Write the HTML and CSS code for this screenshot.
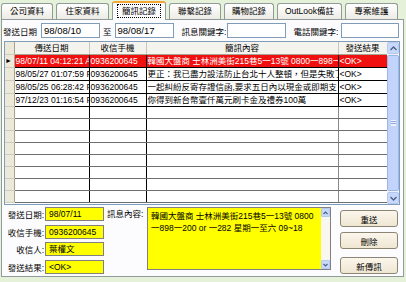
FILE: index.html
```html
<!DOCTYPE html>
<html lang="zh-Hant">
<head>
    <meta charset="UTF-8">
    <title>簡訊記錄</title>
    <link rel="stylesheet" href="styles.css">
</head>
<body>
    <div class="window">
        <div class="tabs">
            <div class="tab t1">公司資料</div>
            <div class="tab t2">住家資料</div>
            <div class="tab t3 active"><span class="focus">簡訊記錄</span></div>
            <div class="tab t4">聯繫記錄</div>
            <div class="tab t5">購物記錄</div>
            <div class="tab t6">OutLook備註</div>
            <div class="tab t7">專案維護</div>
        </div>
        <div class="panel">
            <div class="search">
                <span class="lbl first">發送日期</span>
                <span class="box">98/08/10</span>
                <span class="lbl to">至</span>
                <span class="box">98/08/17</span>
                <span class="lbl kw1">訊息關鍵字:</span>
                <span class="box"></span>
                <span class="lbl kw2">電話關鍵字:</span>
                <span class="box last"></span>
            </div>
            <div class="grid">
                <div class="grid-body">
                    <table>
                        <colgroup>
                            <col class="w-sel"><col class="w-time"><col class="w-phone"><col class="w-msg"><col class="w-res">
                        </colgroup>
                        <tr>
                            <th class="sel"></th><th>傳送日期</th><th>收信手機</th><th>簡訊內容</th><th>發送結果</th>
                        </tr>
                        <tr class="current">
                            <td class="sel"><span class="arrow">&#9658;</span></td>
                            <td>98/07/11 04:12:21 A</td><td>0936200645</td>
                            <td>韓國大盤商 士林洲美街215巷5一13號 0800一898一</td><td>&lt;OK&gt;</td>
                        </tr>
                        <tr>
                            <td class="sel"></td>
                            <td>98/05/27 01:07:59 P</td><td>0936200645</td>
                            <td>更正：我已盡力設法防止台北十人整頓，但是失敗了</td><td>&lt;OK&gt;</td>
                        </tr>
                        <tr>
                            <td class="sel"></td>
                            <td>98/05/25 06:28:42 P</td><td>0936200645</td>
                            <td>一起糾紛反寄存證信函,要求五日內以現金或即期支</td><td>&lt;OK&gt;</td>
                        </tr>
                        <tr>
                            <td class="sel"></td>
                            <td>97/12/23 01:16:54 P</td><td>0936200645</td>
                            <td>你得到新台幣壹仟萬元刷卡金及禮券100萬</td><td>&lt;OK&gt;</td>
                        </tr>
                        <tr class="empty"><td class="sel"></td><td></td><td></td><td></td><td></td></tr>
                        <tr class="empty"><td class="sel"></td><td></td><td></td><td></td><td></td></tr>
                        <tr class="empty"><td class="sel"></td><td></td><td></td><td></td><td></td></tr>
                        <tr class="empty"><td class="sel"></td><td></td><td></td><td></td><td></td></tr>
                        <tr class="empty"><td class="sel"></td><td></td><td></td><td></td><td></td></tr>
                        <tr class="empty"><td class="sel"></td><td></td><td></td><td></td><td></td></tr>
                        <tr class="empty"><td class="sel"></td><td></td><td></td><td></td><td></td></tr>
                        <tr class="empty"><td class="sel"></td><td></td><td></td><td></td><td></td></tr>
                    </table>
                </div>
                <div class="vscroll">
                    <div class="sbtn"><svg width="7" height="5" viewBox="0 0 7 5"><path d="M0.5 4 L3.5 1 L6.5 4" fill="none" stroke="#4d6185" stroke-width="1.4"/></svg></div>
                    <div class="thumb"><span class="grip"></span></div>
                    <div class="sbtn"><svg width="7" height="5" viewBox="0 0 7 5"><path d="M0.5 1 L3.5 4 L6.5 1" fill="none" stroke="#4d6185" stroke-width="1.4"/></svg></div>
                </div>
            </div>
            <div class="detail">
                <div class="fields">
                    <div class="frow"><span class="flbl">發送日期:</span><span class="fval">98/07/11</span></div>
                    <div class="frow"><span class="flbl">收信手機:</span><span class="fval">0936200645</span></div>
                    <div class="frow"><span class="flbl">收信人:</span><span class="fval">葉權文</span></div>
                    <div class="frow"><span class="flbl">發送結果:</span><span class="fval">&lt;OK&gt;</span></div>
                </div>
                <div class="msg-lbl">訊息內容:</div>
                <div class="msg">
                    <div class="msg-text">韓國大盤商 士林洲美街215巷5一13號 0800一898一200 or 一282 星期一至六 09~18</div>
                    <div class="mscroll">
                        <div class="mbtn"><svg width="5" height="4" viewBox="0 0 5 4"><path d="M0.5 3 L2.5 1 L4.5 3" fill="none" stroke="#4d6185" stroke-width="1.2"/></svg></div>
                        <div class="mtrack"></div>
                        <div class="mbtn"><svg width="5" height="4" viewBox="0 0 5 4"><path d="M0.5 1 L2.5 3 L4.5 1" fill="none" stroke="#4d6185" stroke-width="1.2"/></svg></div>
                    </div>
                </div>
                <div class="buttons">
                    <button class="b1">重送</button>
                    <button class="b2">刪除</button>
                    <button class="b3">新傳訊</button>
                </div>
            </div>
        </div>
    </div>
</body>
</html>
```

FILE: styles.css
```css
* { box-sizing: border-box; }
body { margin: 0; background-color: #e6f1da; font-family: "Liberation Sans", "Noto Sans CJK TC", sans-serif; font-size: 8.5px; color: #000; }
.window { width: 406px; height: 282px; padding: 0 2px 0 1px; }

.tabs { display: flex; align-items: flex-end; height: 19px; gap: 3px; }
.tab { height: 16px; padding: 0; text-align: center; line-height: 15px; border: 1px solid #919b9c; border-bottom: none; border-radius: 3px 3px 0 0; background: linear-gradient(#ffffff, #ecebe5); white-space: nowrap; overflow: hidden; }
.t1 { width: 52px; }
.t2 { width: 53px; }
.t3 { width: 54px; }
.t4 { width: 52px; }
.t5 { width: 50px; }
.t6 { width: 65px; }
.t7 { width: 53px; }
.tab.active { height: 19px; line-height: 16px; background: #fcfcfe; border-top: 2px solid #f4a633; margin-bottom: -1px; position: relative; }
.focus { display: inline-block; padding: 0 4px; line-height: 12px; border: 1px dotted #000; }

.panel { height: 258px; border: 1px solid #919b9c; background: #fcfcfe; }

.search { display: flex; align-items: center; height: 15px; margin-top: 3px; }
.lbl { white-space: nowrap; }
.lbl.first { margin: 0 4px 0 1px; }
.lbl.to { margin: 0 3px; }
.lbl.kw1 { margin: 0 1px 0 8px; }
.lbl.kw2 { margin: 0 3px 0 7px; }
.box { width: 59px; height: 15px; border: 1px solid #7f9db9; background: #fff; padding: 0 2px; line-height: 13px; font-size: 9.5px; }
.box.last { width: 58px; }

.grid { display: flex; width: 396px; height: 164px; margin: 3px 0 0 2px; border: 1px solid #7f9db9; background: #fff; overflow: hidden; }
.grid-body { width: 382px; overflow: hidden; }
.grid table { border-collapse: collapse; table-layout: fixed; width: 382px; }
.w-sel { width: 9px; }
.w-time { width: 75px; }
.w-phone { width: 57px; }
.w-msg { width: 192px; }
.w-res { width: 49px; }
.grid th, .grid td { height: 12px; padding: 0 1px; line-height: 12px; border-right: 1px solid #000; border-bottom: 1px solid #000; white-space: nowrap; overflow: hidden; text-align: left; font-weight: normal; }
.grid th { text-align: center; background: #f4f3ee; border-right: 1px solid #c9c7ba; border-bottom: 1px solid #a7a391; }
.grid .sel { background: #ece9d8; border-right: 1px solid #a7a391; border-bottom: 1px solid #cfccbd; padding: 0; }
.arrow { font-size: 7px; display: block; line-height: 12px; }
.current td { background: #f01010; color: #fff; }
.current td.sel { background: #ece9d8; color: #000; }
.empty td { border-bottom-color: #6e6e6e; }
.empty td:nth-child(4), .empty td:nth-child(5) { border-right-color: #8a8a8a; }

.vscroll { width: 12px; display: flex; flex-direction: column; background: #eef2fb; }
.sbtn { height: 12px; display: flex; align-items: center; justify-content: center; background: #c8d8fb; border: 1px solid #b4c8f2; border-radius: 2px; }
.thumb { flex: 1; margin: 1px 0; background: #c2d3fc; border: 1px solid #9db6ea; border-radius: 2px; display: flex; align-items: center; justify-content: center; }
.grip { width: 5px; height: 6px; border-top: 1px solid #eef3ff; border-bottom: 1px solid #eef3ff; background: linear-gradient(#8fa8dc 0 1px, #eef3ff 1px 2px, #8fa8dc 2px 3px, #eef3ff 3px 4px); }

.detail { display: flex; align-items: flex-start; }
.fields { display: flex; flex-direction: column; gap: 3.5px; margin-top: 2px; }
.frow { display: flex; align-items: center; height: 14px; }
.flbl { width: 42px; text-align: right; margin-right: 1px; white-space: nowrap; }
.fval { width: 59px; height: 14px; background: #ffff00; border: 1px solid #808080; padding: 0 3px; line-height: 12px; white-space: nowrap; }
.msg-lbl { margin: 3px 0 0 3px; width: 40px; white-space: nowrap; line-height: 12px; }
.msg { display: flex; width: 184px; height: 63px; margin-top: 2px; border: 1px solid #808080; background: #ffff00; }
.msg-text { flex: 1; padding: 2px 3px; line-height: 12px; }
.mscroll { width: 9px; display: flex; flex-direction: column; background: #f8f8f0; }
.mbtn { height: 9px; display: flex; align-items: center; justify-content: center; background: #c8d8fb; border: 1px solid #b4c8f2; border-radius: 1px; }
.mtrack { flex: 1; }

.buttons { display: flex; flex-direction: column; margin-left: 9px; }
.buttons button { width: 58px; height: 17px; padding: 0; font: inherit; font-size: 8.5px; background: linear-gradient(#fbf6ec, #efe6d2); border: 1px solid #8c8574; border-radius: 3px; color: #000; }
.b1 { margin-top: 5px; }
.b2 { margin-top: 5px; }
.b3 { margin-top: 8px; }
```
